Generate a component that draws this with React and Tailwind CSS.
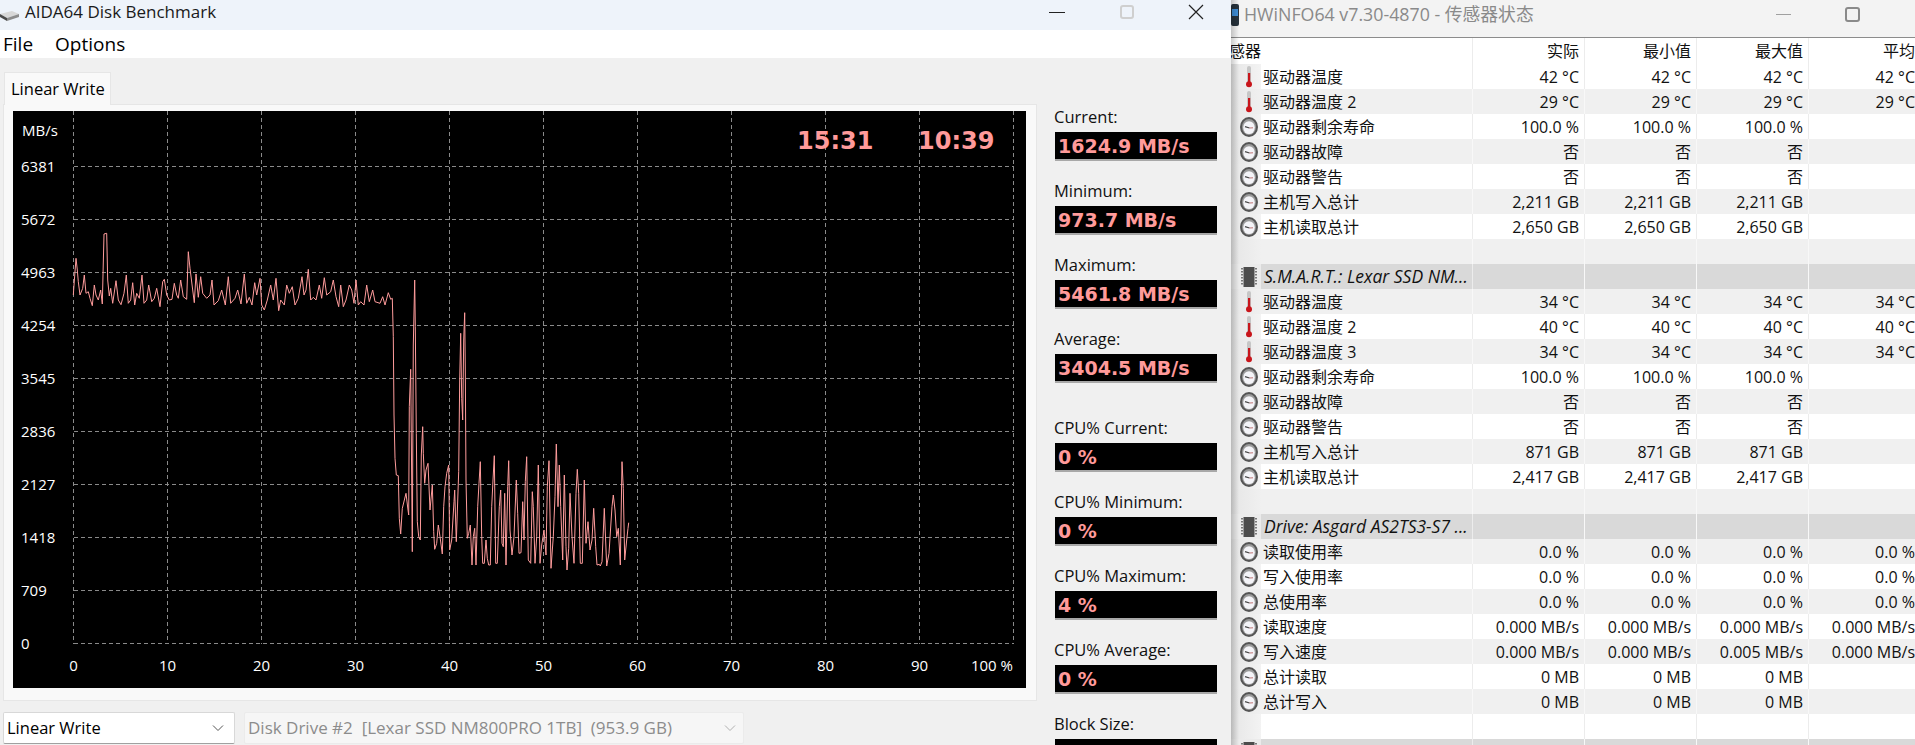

const A = "100,255;102,225;108,145;112,180;115,215;120,255;128,235;133,195;138,250;145,245;150,265;157,287;163,225;168,255;175,270;182,240;187,282;192,72;200,70;203,210;208,258;212,235;218,280;228,212;235,270;243,284;252,250;259,195;265,280;272,270;278,218;284,285;290,250;298,265;306,195;312,280;320,270;326,225;335,275;343,265;350,235;360,290;368,215;373,208;380,255;388,270;396,268;403,220;410,255;415,265;422,210;430,260;440,268;445,125;450,175;458,240;463,278;468,192;475,262;482,200;488,250;500,265;510,255;516,210;522,285;535,272;545,240;556,285;565,200;572,280;585,265;593,240;603,282;613,192;620,280;628,262;636,285;644,218;650,255;660,205;665,285;673,300;682,270;692,225;700,270;708,205;716,302;722,270;733,285;740,225;748,250;757,230;765,285;775,265;786,200;792,255;798,240;805,178;812,270;820,262;828,270;838,225;845,265;853,203;860,255;872,245;880,210;888,260;896,290;902,225;910,290;918,270;928,225;935,240;942,280;948,210;955,285;962,275;972,285;980,225;988,275;998,240;1005,275;1020,280;1028,260;1035,285;1045,248;1052,268;1057,265;1060,380";
const B = "162,405;165,535;169,585;175,587;178,715;182,762;187,685;198,640;204,690;206,705;208,380;212,268;215,600;217,815;220,195;224,0;226,140;229,460;232,725;236,770;241,780;244,525;248,440;250,520;254,610;258,570;264,550;270,690;277,615;281,755;284,808;290,790;295,735;300,770;307,822;311,680;315,620;320,580;326,555;329,810;335,780;342,665;344,630;349,785;356,575;359,300;362,160;365,355;368,420;371,180;374,98;376,270;378,600;382,775;386,760;391,735;396,855;400,770;404,745;408,855;413,680;417,610;421,545;425,770;428,850;433,850;438,780;442,835;446,855;451,855;455,680;459,600;463,527;467,850;472,850;478,680;482,630;486,790;490,800;494,640;498,855;503,620;506,542;510,750;516,825;522,770;529,600;533,700;537,820;543,818;548,665;552,780;556,605;560,530;565,840;572,850;577,635;580,680;585,850;590,770;595,555;600,850;605,795;612,750;618,825;622,620;627,542;633,865;640,770;645,650;649,492;654,680;658,555;662,680;668,840;673,585;678,800;681,870;686,805;690,640;696,770;702,850;708,640;712,568;716,640;721,850;727,850;733,600;738,790;744,725;750,810;756,780;761,685;767,800;771,855;778,853;781,858;786,845;793,685;800,858;807,820;816,680;820,645;825,690;830,770;835,745;841,855;846,545;850,625;854,840;860,780;864,745;866,728";
const pts = [
  ...A.split(";").map((p) => { const [x, y] = p.split(",").map(Number); return `${(40 + x / 3).toFixed(1)},${(210 + y / 3).toFixed(1)}`; }),
  ...B.split(";").map((p) => { const [x, y] = p.split(",").map(Number); return `${(340 + x / 3).toFixed(1)},${(280 + y / 3).toFixed(1)}`; }),
].join(" ");

const ylabels = ["6381", "5672", "4963", "4254", "3545", "2836", "2127", "1418", "709", "0"];
const xvals = [0, 10, 20, 30, 40, 50, 60, 70, 80, 90];

function Chart() {
  return (
    <svg width="1013" height="577" viewBox="13 111 1013 577" className="block bg-black">
      {Array.from({ length: 11 }).map((_, i) => (
        <line key={i} x1={73.5 + 94 * i} x2={73.5 + 94 * i} y1="111" y2="643.5" stroke="#8a8a8a" strokeDasharray="4 3" shapeRendering="crispEdges" />
      ))}
      {ylabels.map((_, i) => (
        <line key={i} x1="73.5" x2="1013.5" y1={166.5 + 53 * i} y2={166.5 + 53 * i} stroke="#8a8a8a" strokeDasharray="4 3" shapeRendering="crispEdges" />
      ))}
      <polyline points={pts} fill="none" stroke="#ff9c9c" strokeWidth="1" />
      <g fill="#ffffff" fontFamily="'Open Sans', sans-serif" fontSize="15">
        <text x="22" y="136">MB/s</text>
        {ylabels.map((l, i) => (
          <text key={l} x="21" y={172 + 53 * i}>{l}</text>
        ))}
        {xvals.map((v, i) => (
          <text key={v} x={73.5 + 94 * i} y="671" textAnchor="middle">{v}</text>
        ))}
        <text x="1013" y="671" textAnchor="end">100 %</text>
      </g>
      <g fill="#ff9a9a" fontFamily="'DejaVu Sans', sans-serif" fontWeight="700" fontSize="24">
        <text x="797" y="149">15:31</text>
        <text x="918" y="149">10:39</text>
      </g>
    </svg>
  );
}

function Stat({ label, value, extra = "mt-0" }) {
  return (
    <div className={`flex flex-col ${extra}`}>
      <div className="h-[27px] text-[16.5px] leading-[24px] text-[#111] -ml-[1px] whitespace-nowrap">{label}</div>
      <div className="h-[29px] w-[162px] bg-black border-b-2 border-[#a8a8a8] pl-[3px] pt-[2px] flex items-center font-['DejaVu_Sans',sans-serif] font-bold text-[19px] leading-none text-[#ff9a9a] shrink-0 whitespace-nowrap">
        {value}
      </div>
    </div>
  );
}

function Chevron({ color }) {
  return (
    <svg width="12" height="8" viewBox="0 0 12 8" fill="none" stroke={color} strokeWidth="1">
      <path d="M1 1.5 L6 6.5 L11 1.5" />
    </svg>
  );
}

function Thermo() {
  return (
    <svg width="14" height="22" viewBox="0 0 14 22">
      <rect x="5" y="0" width="4" height="18" rx="2" fill="#c6c6c6" />
      <rect x="6" y="7" width="2.2" height="10" fill="#c8151b" />
      <circle cx="7" cy="18.2" r="3" fill="#c8151b" />
    </svg>
  );
}

function Gauge() {
  return (
    <svg width="18" height="20" viewBox="0 0 18 20">
      <ellipse cx="9" cy="10" rx="8" ry="9" fill="#9a9a9a" stroke="#555555" strokeWidth="2" />
      <ellipse cx="9" cy="10.6" rx="5.8" ry="6.4" fill="#f4f4f8" />
      <path d="M5 9.6 L9.5 11" fill="none" stroke="#444" strokeWidth="1.1" />
      <path d="M9.5 11 L13 10.8" fill="none" stroke="#b05050" strokeWidth="0.8" />
    </svg>
  );
}

function Chip() {
  return (
    <svg width="16" height="20" viewBox="0 0 16 20">
      <rect x="2.5" y="0" width="11" height="20" fill="#4c4c4c" />
      <path d="M1 1v18M15 1v18" stroke="#7a7a7a" strokeWidth="2" strokeDasharray="1.5 1.5" />
    </svg>
  );
}

const S1 = [
  ["t", "驱动器温度", "42 °C", "42 °C", "42 °C", "42 °C"],
  ["t", "驱动器温度 2", "29 °C", "29 °C", "29 °C", "29 °C"],
  ["g", "驱动器剩余寿命", "100.0 %", "100.0 %", "100.0 %", ""],
  ["g", "驱动器故障", "否", "否", "否", ""],
  ["g", "驱动器警告", "否", "否", "否", ""],
  ["g", "主机写入总计", "2,211 GB", "2,211 GB", "2,211 GB", ""],
  ["g", "主机读取总计", "2,650 GB", "2,650 GB", "2,650 GB", ""],
  ["b"],
  ["h", "S.M.A.R.T.: Lexar SSD NM..."],
  ["t", "驱动器温度", "34 °C", "34 °C", "34 °C", "34 °C"],
  ["t", "驱动器温度 2", "40 °C", "40 °C", "40 °C", "40 °C"],
  ["t", "驱动器温度 3", "34 °C", "34 °C", "34 °C", "34 °C"],
  ["g", "驱动器剩余寿命", "100.0 %", "100.0 %", "100.0 %", ""],
  ["g", "驱动器故障", "否", "否", "否", ""],
  ["g", "驱动器警告", "否", "否", "否", ""],
  ["g", "主机写入总计", "871 GB", "871 GB", "871 GB", ""],
  ["g", "主机读取总计", "2,417 GB", "2,417 GB", "2,417 GB", ""],
  ["b"],
  ["h", "Drive: Asgard AS2TS3-S7 ..."],
  ["g", "读取使用率", "0.0 %", "0.0 %", "0.0 %", "0.0 %"],
  ["g", "写入使用率", "0.0 %", "0.0 %", "0.0 %", "0.0 %"],
  ["g", "总使用率", "0.0 %", "0.0 %", "0.0 %", "0.0 %"],
  ["g", "读取速度", "0.000 MB/s", "0.000 MB/s", "0.000 MB/s", "0.000 MB/s"],
  ["g", "写入速度", "0.000 MB/s", "0.000 MB/s", "0.005 MB/s", "0.000 MB/s"],
  ["g", "总计读取", "0 MB", "0 MB", "0 MB", ""],
  ["g", "总计写入", "0 MB", "0 MB", "0 MB", ""],
  ["b"],
  ["h", ""],
];

function Cells({ vals, bg }) {
  return vals.map((v, i) => (
    <div key={i} className={`w-[112px] shrink-0 text-right pr-[5px] whitespace-nowrap border-r ${bg ? "border-[#f8f8f8]" : "border-[#ececec]"}`}>
      {v}
    </div>
  ));
}

function Row({ row, k }) {
  const [type, name, ...vals] = row;
  const gray = k % 2 === 1;
  if (type === "h") {
    return (
      <div className="h-[25px] flex bg-[#d9d9d9] shrink-0">
        <div className="w-[30px] flex items-center justify-end pr-[4px] shrink-0 bg-[#ebebeb]"><Chip /></div>
        <div className="w-[212px] shrink-0 italic pl-[3px] whitespace-nowrap overflow-hidden border-r border-[#ececec] text-[17.5px] leading-[25px]">{name}</div>
        <Cells vals={["", "", "", ""]} bg />
      </div>
    );
  }
  return (
    <div className={`h-[25px] flex shrink-0 leading-[26px] ${gray ? "bg-[#f0f0f0]" : "bg-white"}`}>
      <div className={`w-[30px] flex items-center justify-end shrink-0 bg-gradient-to-r from-[#e6e6e6] ${gray ? "to-[#f0f0f0]" : "to-[#f3f3f3]"}`}>
        {type === "t" && <div className="pr-[5px] flex"><Thermo /></div>}
        {type === "g" && <div className="pr-[3px] flex"><Gauge /></div>}
      </div>
      <div className={`w-[212px] shrink-0 pl-[2px] whitespace-nowrap border-r ${gray ? "border-[#f8f8f8]" : "border-[#ececec]"}`}>{name}</div>
      <Cells vals={type === "b" ? ["", "", "", ""] : vals} bg={gray} />
    </div>
  );
}

export default function App() {
  return (
    <div className="w-[1915px] h-[745px] flex overflow-hidden bg-[#f0f0f0] font-['Open_Sans','Noto_Sans_CJK_SC',sans-serif] text-black">
      <div className="w-[1231px] h-[745px] flex flex-col shrink-0">
        <div className="h-[30px] bg-[#eef3fa] flex items-center shrink-0 pb-[6px]">
          <svg width="19" height="12" viewBox="0 0 19 12" className="mt-[8px] shrink-0">
            <path d="M0 4 L12 1 L19 4 L7 8 Z" fill="#d8d8d8" />
            <path d="M0 4 L7 8 V11 L0 7 Z" fill="#4a4a4a" />
            <path d="M7 8 L19 4 V7 L7 11 Z" fill="#8c8c8c" />
          </svg>
          <div className="ml-[6px] text-[17px] text-[#1a1a1a] whitespace-nowrap">AIDA64 Disk Benchmark</div>
          <div className="flex-1" />
          <div className="w-[16px] h-[1px] bg-[#222] mr-[55px]" />
          <div className="w-[14px] h-[14px] rounded-[3px] border-2 border-[#cfcfcf] mr-[54px]" />
          <svg width="16" height="16" viewBox="0 0 16 16" stroke="#222" strokeWidth="1.2" className="mr-[27px]">
            <path d="M1 1 L15 15 M15 1 L1 15" />
          </svg>
        </div>
        <div className="h-[28px] bg-white flex items-center gap-[22px] pl-[3px] text-[19px] shrink-0">
          <span>File</span>
          <span>Options</span>
        </div>
        <div className="flex flex-1 min-h-0">
          <div className="w-[1037px] shrink-0 flex flex-col pt-[14px]">
            <div className="ml-[4px] w-[107px] h-[33px] bg-[#f9f9f9] border border-b-0 border-[#e6e6e6] text-[16.5px] pl-[6px] leading-[31px] shrink-0 -mb-[1px] relative whitespace-nowrap">
              Linear Write
            </div>
            <div className="ml-[3px] h-[597px] bg-[#f9f9f9] border border-[#e6e6e6] pt-[6px] pl-[9px] shrink-0">
              <Chart />
            </div>
            <div className="flex mt-[11px] pl-[3px] gap-[9px] shrink-0">
              <div className="w-[232px] h-[32px] bg-white border border-[#d8d8d8] border-b-[#a0a0a0] flex items-center justify-between pl-[3px] pr-[10px] text-[16.5px] rounded-[2px]">
                <span>Linear Write</span>
                <Chevron color="#555" />
              </div>
              <div className="w-[500px] h-[32px] bg-[#f6f6f6] border border-[#ebebeb] flex items-center justify-between pl-[3px] pr-[7px] text-[17px] text-[#8c8c8c] rounded-[2px] whitespace-pre">
                <span>Disk Drive #2  [Lexar SSD NM800PRO 1TB]  (953.9 GB)</span>
                <Chevron color="#b0b0b0" />
              </div>
            </div>
          </div>
          <div className="flex-1 flex flex-col pl-[18px] pt-[47px] gap-[18px]">
            <Stat label="Current:" value="1624.9 MB/s" />
            <Stat label="Minimum:" value="973.7 MB/s" />
            <Stat label="Maximum:" value="5461.8 MB/s" />
            <Stat label="Average:" value="3404.5 MB/s" />
            <Stat label="CPU% Current:" value="0 %" extra="mt-[15px]" />
            <Stat label="CPU% Minimum:" value="0 %" />
            <Stat label="CPU% Maximum:" value="4 %" />
            <Stat label="CPU% Average:" value="0 %" />
            <Stat label="Block Size:" value="" />
          </div>
        </div>
      </div>
      <div className="w-[684px] h-[745px] flex flex-col shrink-0 overflow-hidden bg-white text-[16px] text-[#111] relative">
        <div className="h-[38px] bg-[#f3f3f3] border-b border-[#8c8c8c] flex items-center shrink-0 pb-[8px]">
          <svg width="9" height="22" viewBox="0 0 9 22" className="shrink-0">
            <rect x="0" y="0" width="8" height="22" rx="2" fill="#26323c" />
            <rect x="1" y="5" width="6" height="7" fill="#3f8fd8" />
          </svg>
          <div className="ml-[4px] text-[17.8px] text-[#8a8a8a] whitespace-nowrap">HWiNFO64 v7.30-4870 - 传感器状态</div>
          <div className="flex-1" />
          <div className="w-[15px] h-[1px] bg-[#a0a0a0] mr-[54px]" />
          <div className="w-[15px] h-[15px] rounded-[3px] border-2 border-[#8a8a8a] mr-[55px]" />
        </div>
        <div className="h-[26px] flex shrink-0 bg-white leading-[26px]">
          <div className="w-[242px] shrink-0 overflow-hidden border-r border-[#ececec] whitespace-nowrap"><span className="-ml-[18px] inline-block">传感器</span></div>
          {["实际", "最小值", "最大值", "平均"].map((h) => (
            <div key={h} className="w-[112px] shrink-0 text-right pr-[5px] border-r border-[#ececec]">{h}</div>
          ))}
        </div>
        {S1.map((r, i) => (
          <Row key={i} row={r} k={i} />
        ))}
        <div className="absolute left-0 top-0 bottom-0 w-[8px] bg-gradient-to-r from-[rgba(0,0,0,0.2)] to-transparent" />
      </div>
    </div>
  );
}
